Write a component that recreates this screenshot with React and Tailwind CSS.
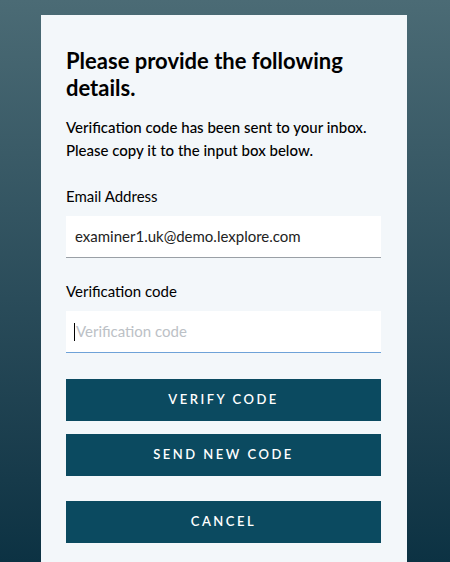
export default function App() {
  return (
    <div
      className="h-[562px] w-[450px] overflow-hidden bg-gradient-to-b from-[#4b6b75] to-[#0c3243] pt-[15px]"
      style={{ fontFamily: 'Lato, "Open Sans", sans-serif' }}
    >
      <div className="ml-[41px] w-[366px] h-[600px] bg-[#f3f7fa] pl-[25px] pr-[26px] pt-[32px]">
        <h1 className="text-[22px] leading-[27px] font-bold text-black">
          Please provide the following details.
        </h1>
        <p className="mt-[15px] text-[15px] leading-[23px] font-medium text-black">
          Verification code has been sent to your inbox. Please copy it to the input box below.
        </p>

        <label className="block mt-[23px] text-[15px] leading-[22px] text-black">Email Address</label>
        <div className="mt-[9px] h-[42px] bg-white border-b border-[#9aa0a6] flex items-center px-[9px] text-[15px] text-[#222]">
          examiner1.uk@demo.lexplore.com
        </div>

        <label className="block mt-[22px] text-[15px] leading-[22px] text-black">Verification code</label>
        <div className="mt-[9px] h-[42px] bg-white border-b border-[#6ea2d8] flex items-center px-[8px] text-[15px]">
          <span className="w-px h-[18px] bg-black mr-px"></span>
          <span className="text-[#bcc1c6]">Verification code</span>
        </div>

        <div className="mt-[26px] flex flex-col">
          <button className="h-[42px] bg-[#0b4a60] text-white text-[13px] font-semibold tracking-[2.5px]">VERIFY CODE</button>
          <button className="mt-[13px] h-[42px] bg-[#0b4a60] text-white text-[13px] font-semibold tracking-[2.5px]">SEND NEW CODE</button>
          <button className="mt-[25px] h-[42px] bg-[#0b4a60] text-white text-[13px] font-semibold tracking-[2.5px]">CANCEL</button>
        </div>
      </div>
    </div>
  );
}
